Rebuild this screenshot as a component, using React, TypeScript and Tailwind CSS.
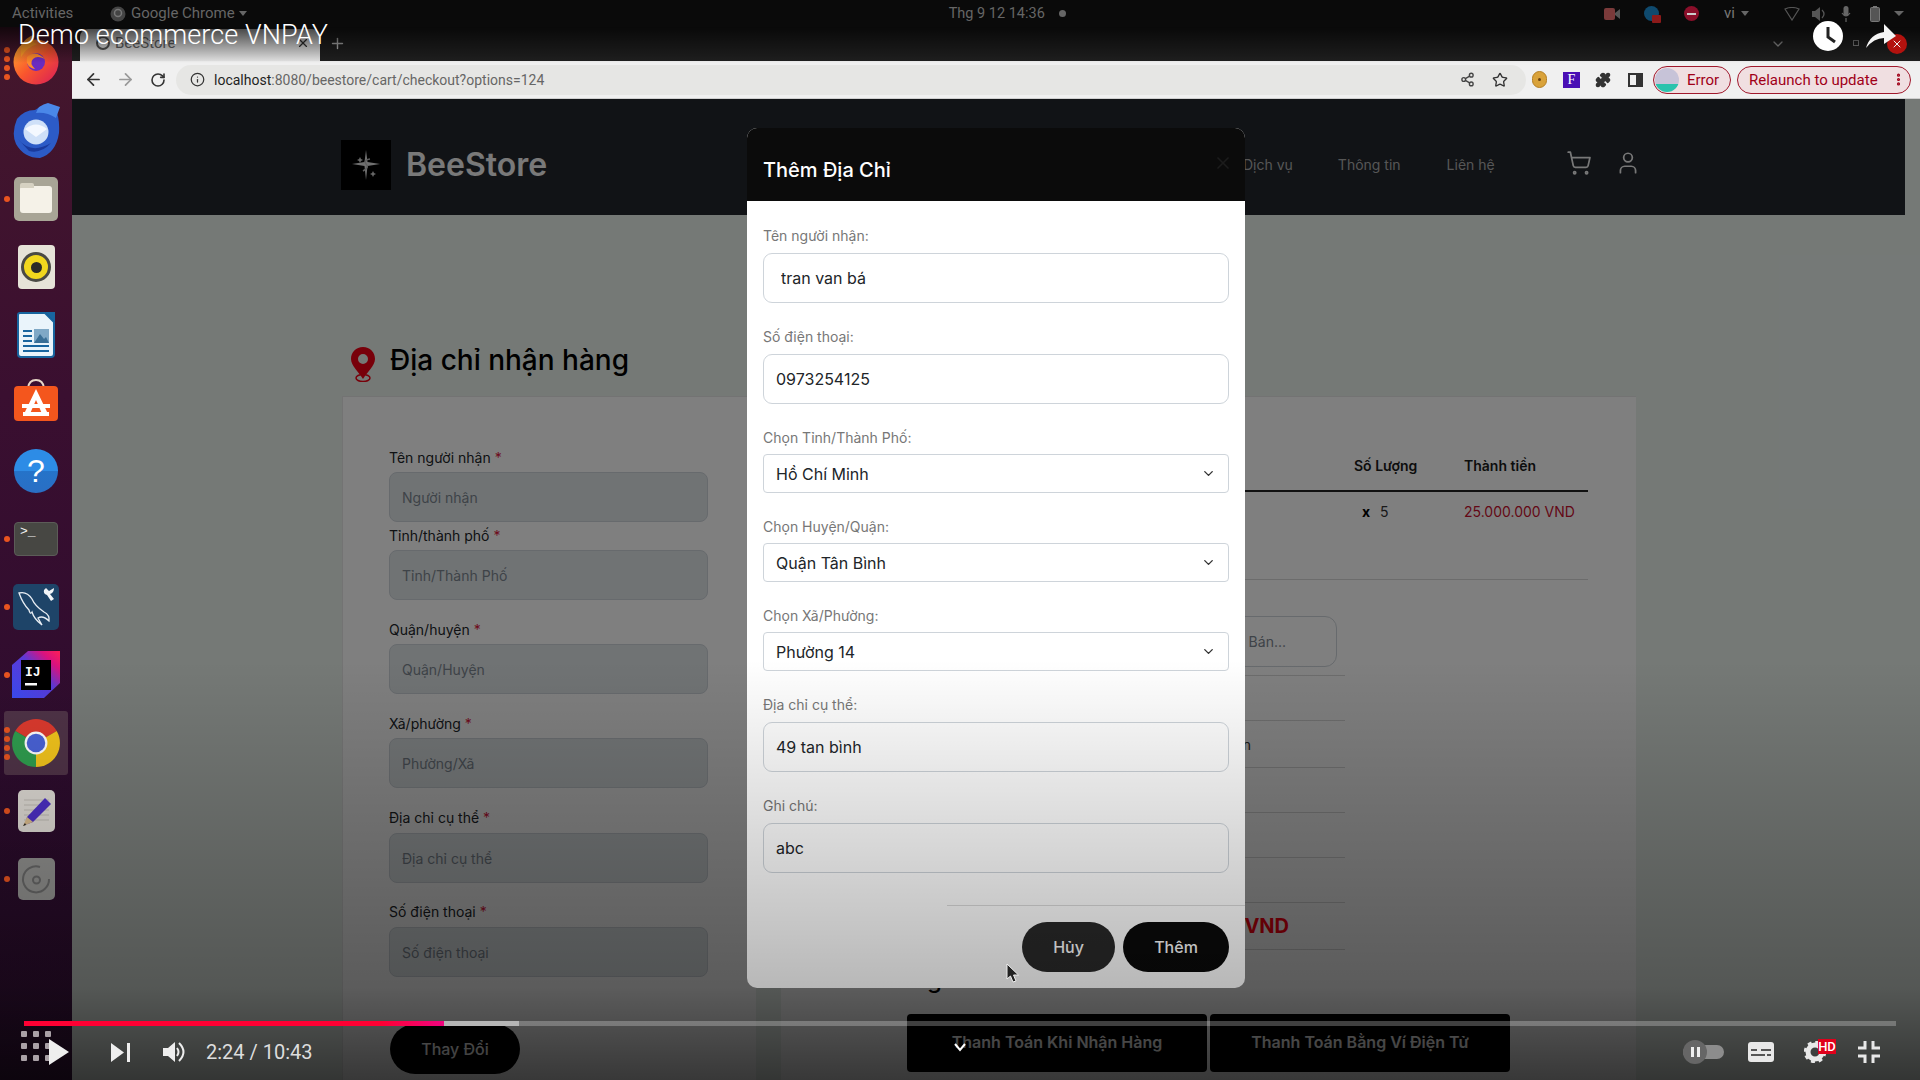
import { ArrowLeft, ArrowRight, RotateCw, Info, Share2, Star, Puzzle, MoreVertical, ShoppingCart, User, ChevronDown, X, Plus } from "lucide-react";

const Firefox = () => (
  <svg width="46" height="50" viewBox="0 0 46 50" className="-mt-[6px]">
    <defs>
      <linearGradient id="ff" x1="0" y1="0" x2="1" y2="1"><stop offset="0" stopColor="#ffb52e" /><stop offset="0.5" stopColor="#f9562d" /><stop offset="1" stopColor="#d81b5a" /></linearGradient>
    </defs>
    <circle cx="23" cy="27" r="22.5" fill="url(#ff)" />
    <path d="M8 10 Q14 2 20 0 Q18 8 24 9 Q14 12 8 22 Z" fill="#ff9b28" />
    <circle cx="23" cy="27" r="9" fill="#6a2bc0" />
    <path d="M14 22 Q22 14 32 24 Q24 20 20 24 Q16 28 22 34 Q12 32 14 22 Z" fill="#ff8a2a" />
  </svg>
);
const Thunderbird = () => (
  <svg width="50" height="56" viewBox="0 0 50 56">
    <path d="M6 16 Q0 30 5 41 Q13 55 29 55 Q45 50 48 30 Q49 14 44 6 Q34 -1 24 7 Q13 7 6 16 Z" fill="#2c5bc7" />
    <path d="M49 4 L37 0 Q27 2 25 10 Q36 9 45 15 Z" fill="#4a87e8" />
    <circle cx="25" cy="29" r="12.5" fill="#cfe0f8" />
    <path d="M14 26 L25 34 L36 26 Q25 17 14 26 Z" fill="#f4f8ff" />
    <path d="M7 36 Q20 52 40 40 Q30 51 18 48 Z" fill="#1a3a9c" />
  </svg>
);
const Files = () => (
  <div className="w-[44px] h-[44px] rounded-[5px] bg-[#a8a596] flex items-center justify-center">
    <div className="relative w-[32px] h-[27px] rounded-[3px] bg-[#f5f2e8]">
      <div className="absolute -top-[3px] left-0 w-[14px] h-[5px] rounded-t-[2px] bg-[#d6d2c2]" />
    </div>
  </div>
);
const Rhythmbox = () => (
  <div className="w-[37px] h-[44px] rounded-[4px] bg-[#e6e3d8] flex items-center justify-center">
    <div className="w-[30px] h-[30px] rounded-full bg-[#f1d71e] border-[3px] border-[#4a4a44] flex items-center justify-center">
      <div className="w-[11px] h-[11px] rounded-full bg-[#2b2b28]" />
    </div>
  </div>
);
const Writer = () => (
  <svg width="38" height="46" viewBox="0 0 38 46">
    <path d="M3 1 H28 L37 10 V42 Q37 45 34 45 H4 Q1 45 1 42 V3 Q1 1 3 1 Z" fill="#eaf4fb" stroke="#18659f" strokeWidth="2" />
    <path d="M28 0 L38 10 V0 Z" fill="#18659f" />
    <path d="M6 19 H15 M6 24 H15 M6 29 H15 M6 34 H32 M6 39 H32" stroke="#18659f" strokeWidth="2" />
    <rect x="17" y="17" width="15" height="14" fill="#7fa8c6" />
    <path d="M17 31 L23 22 L27 27 L29 25 L32 31 Z" fill="#3a6f96" />
  </svg>
);
const Software = () => (
  <svg width="44" height="44" viewBox="0 0 44 44" className="-mt-[6px]">
    <path d="M14 10 Q15 2 22 2 Q29 2 30 10" fill="none" stroke="#e8d8c8" strokeWidth="2" />
    <rect x="0" y="8" width="44" height="35" rx="4" fill="#f4561d" />
    <path d="M22 11 L35 38 H29 L22 22 L15 38 H9 Z" fill="#fff" />
    <rect x="8" y="26" width="28" height="4" fill="#fff" />
    <rect x="9" y="34" width="26" height="4" fill="#fff" />
  </svg>
);
const Help = () => (
  <div className="w-[44px] h-[44px] rounded-full bg-[linear-gradient(to_bottom,#2d8ce6_0%,#2d8ce6_50%,#2573c9_50%,#2a6fc4_100%)] flex items-center justify-center text-white text-[32px] leading-none [font-family:'Liberation_Sans',sans-serif]">?</div>
);
const Terminal = () => (
  <div className="w-[44px] h-[34px] rounded-[4px] bg-[#474743] border border-[#5c5c58] pl-[5px] pt-[2px] text-[#f2f2f2] text-[13px] leading-[14px] [font-family:'Liberation_Mono',monospace]">&gt;_</div>
);
const MySql = () => (
  <svg width="46" height="46" viewBox="0 0 46 46">
    <rect width="46" height="46" rx="5" fill="#1e4468" />
    <path d="M6 9 Q14 7 19 15 Q22 22 31 28 Q37 31 36 37 Q30 31 25 34 L29 41 Q21 35 19 28 Q17 31 16 26 Q10 20 6 9 Z" fill="none" stroke="#e8eef4" strokeWidth="1.3" />
    <path d="M33 4 L36 7 L41 4 Q41 9 37 10 L41 15 L38 17 L34 11 Q30 10 31 6 Z" fill="#f2f5f8" />
  </svg>
);
const Intellij = () => (
  <svg width="50" height="48" viewBox="0 0 50 48">
    <defs>
      <linearGradient id="ij" x1="0" y1="1" x2="1" y2="0"><stop offset="0" stopColor="#3a4bf2" /><stop offset="0.55" stopColor="#5b3ad6" /><stop offset="0.8" stopColor="#d9127f" /><stop offset="1" stopColor="#ff1f55" /></linearGradient>
    </defs>
    <path d="M1 14 L17 0 H49 V32 L33 47 H1 Z" fill="url(#ij)" />
    <rect x="10" y="9" width="30" height="30" fill="#000" />
    <rect x="14" y="32" width="12" height="2.5" fill="#fff" />
    <text x="14" y="25" fill="#fff" fontSize="13" fontWeight="700" fontFamily="Liberation Mono, monospace">IJ</text>
  </svg>
);
const Chrome = () => (
  <svg width="48" height="48" viewBox="0 0 44 44">
    <path d="M22 22 L3 11 A22 22 0 0 1 41 11 Z" fill="#dd3a2e" />
    <path d="M22 22 L41 11 A22 22 0 0 1 22 44 Z" fill="#f4c51c" />
    <path d="M22 22 L22 44 A22 22 0 0 1 3 11 Z" fill="#2f9e4f" />
    <circle cx="22" cy="22" r="10.5" fill="#fff" />
    <circle cx="22" cy="22" r="8.5" fill="#4a63d8" />
  </svg>
);
const Editor = () => (
  <svg width="37" height="42" viewBox="0 0 37 42">
    <rect width="37" height="42" rx="5" fill="#ddd9d3" />
    <path d="M6 10 H31 M6 15 H31 M6 20 H31 M6 25 H31 M6 30 H31" stroke="#bdb9b2" strokeWidth="1" />
    <path d="M27 8 L33 14 L15 32 L7 35 L9 27 Z" fill="#4b2fc4" />
    <path d="M9 27 L15 32 L5 36 Z" fill="#d7b98b" />
    <path d="M7 33 L5 36 L8 35 Z" fill="#222" />
  </svg>
);
const Disc = () => (
  <svg width="37" height="42" viewBox="0 0 37 42">
    <rect width="37" height="42" rx="5" fill="#8e8e8c" />
    <path d="M22 9 A13 13 0 1 0 31 21" fill="none" stroke="#666" strokeWidth="2" />
    <circle cx="18.5" cy="22" r="3.5" fill="none" stroke="#666" strokeWidth="2" />
  </svg>
);

const dockItems = [
  { icon: <Firefox />, dots: 4 },
  { icon: <Thunderbird />, dots: 0 },
  { icon: <Files />, dots: 1 },
  { icon: <Rhythmbox />, dots: 0 },
  { icon: <Writer />, dots: 0 },
  { icon: <Software />, dots: 0 },
  { icon: <Help />, dots: 0 },
  { icon: <Terminal />, dots: 1 },
  { icon: <MySql />, dots: 1 },
  { icon: <Intellij />, dots: 1 },
  { icon: <Chrome />, dots: 4, active: true },
  { icon: <Editor />, dots: 1 },
  { icon: <Disc />, dots: 1 },
];

function Dock() {
  return (
    <div className="w-[72px] shrink-0 pt-[2px] flex flex-col bg-[linear-gradient(to_bottom,#45172c_0%,#3a0f30_35%,#2e0c2e_70%,#1d0a1f_100%)]">
      {dockItems.map((d, i) => (
        <div key={i} className="relative h-[68px] flex items-center justify-center">
          {d.active && <div className="absolute left-[4px] right-[4px] top-[2px] bottom-[2px] rounded-[3px] bg-[#4f3347]" />}
          <div className="relative flex items-center justify-center">{d.icon}</div>
          {d.dots > 0 && (
            <div className="absolute left-[4px] top-0 bottom-0 flex flex-col justify-center gap-[3px]">
              {Array.from({ length: d.dots }).map((_, k) => (
                <span key={k} className="w-[6px] h-[6px] rounded-full bg-[#e95420]" />
              ))}
            </div>
          )}
        </div>
      ))}
    </div>
  );
}

function TopBar() {
  return (
    <div className="relative h-[27px] shrink-0 bg-[#0a0a0a] flex items-center text-[#666666] text-[15px] [font-family:Roboto,sans-serif] pl-[12px] pr-[16px]">
      <span className="w-[98px]">Activities</span>
      <svg width="16" height="16" viewBox="0 0 16 16" className="mr-[5px]"><circle cx="8" cy="8" r="7.5" fill="#444" /><circle cx="8" cy="7" r="3.5" fill="none" stroke="#777" strokeWidth="1.5" /></svg>
      <span>Google Chrome</span>
      <span className="ml-[4px] w-0 h-0 border-l-[4px] border-r-[4px] border-t-[5px] border-l-transparent border-r-transparent border-t-[#666]" />
      <div className="ml-[702px] flex items-center text-[14.5px]">
        <span className="w-[110px]">Thg 9 12  14:36</span>
        <span className="w-[7px] h-[7px] rounded-full bg-[#666]" />
      </div>
      <div className="ml-auto flex items-center">
        <svg width="16" height="12" viewBox="0 0 16 12"><rect width="11" height="12" rx="2" fill="#7a3a3a" /><path d="M11 5 L16 1 V11 L11 7 Z" fill="#555" /></svg>
        <span className="relative ml-[24px] w-[15px] h-[15px] rounded-full bg-[#0f4a6e]"><span className="absolute -right-[2px] -bottom-[2px] w-[9px] h-[8px] bg-[#8b1a1a] rounded-[1px]" /></span>
        <span className="ml-[25px] w-[15px] h-[15px] rounded-full bg-[#8a0f2a] flex items-center justify-center"><span className="w-[9px] h-[2px] bg-[#ccc]" /></span>
        <span className="ml-[25px] text-[#777] text-[15px]">vi</span>
        <span className="ml-[6px] w-0 h-0 border-l-[4px] border-r-[4px] border-t-[5px] border-l-transparent border-r-transparent border-t-[#666]" />
        <svg width="16" height="14" viewBox="0 0 16 14" className="ml-[35px]"><path d="M1 2 Q8 -1 15 2 L8 13 Z" fill="none" stroke="#555" strokeWidth="1.2" /></svg>
        <svg width="15" height="14" viewBox="0 0 15 14" className="ml-[12px]"><path d="M0 4 H3 L8 0 V14 L3 10 H0 Z" fill="#555" /><path d="M10 3 Q14 7 10 11" fill="none" stroke="#555" strokeWidth="1.3" /></svg>
        <svg width="10" height="16" viewBox="0 0 10 16" className="ml-[14px]"><rect x="2.5" y="0" width="5" height="10" rx="2.5" fill="#666" /><path d="M1 7 Q5 13 9 7 M5 12 V16" fill="none" stroke="#666" strokeWidth="1.2" /></svg>
        <svg width="10" height="16" viewBox="0 0 10 16" className="ml-[19px]"><rect x="0.5" y="1.5" width="9" height="14" rx="1" fill="#555" stroke="#777" /><rect x="3" y="0" width="4" height="2" fill="#777" /></svg>
        <span className="ml-[14px] w-0 h-0 border-l-[5px] border-r-[5px] border-t-[5px] border-l-transparent border-r-transparent border-t-[#666]" />
      </div>
    </div>
  );
}

function TabStrip() {
  return (
    <div className="relative h-[34px] shrink-0 bg-[#1f1f1f] flex items-end pl-[8px]">
      <div className="w-[240px] h-[32px] rounded-t-[8px] bg-[#e6e6e6] flex items-center pl-[16px] pb-[4px] pr-[10px] text-[#666] text-[15px] [font-family:Roboto,sans-serif]">
        <span className="w-[14px] h-[14px] rounded-full border-[2px] border-[#555] mr-[5px]" />
        <span>BeeStore</span>
        <X className="ml-auto" size={14} color="#333" />
      </div>
      <Plus className="ml-[9px] mb-[9px]" size={17} color="#bbb" />
      <ChevronDown className="absolute left-[1698px] top-[9px]" size={16} color="#999" />
      <span className="absolute left-[1781px] top-[13px] w-[6px] h-[6px] border border-[#888]" />
    </div>
  );
}

function Toolbar() {
  return (
    <div className="relative h-[38px] shrink-0 bg-[#f0f0f0] border-b border-[#cfcfcf] flex items-center pl-[12px]">
      <ArrowLeft size={19} color="#333" strokeWidth={2.2} />
      <ArrowRight size={19} color="#999" strokeWidth={2.2} className="ml-[13px]" />
      <RotateCw size={16} color="#333" strokeWidth={2.4} className="ml-[15px]" />
      <div className="ml-[10px] h-[30px] w-[1350px] rounded-full bg-[#e6e6e4] flex items-center pl-[14px] pr-[18px]">
        <Info size={15} color="#333" />
        <span className="ml-[9px] mt-[2px] text-[14px] [font-family:Roboto,sans-serif] text-[#666]"><span className="text-[#1f1f1f]">localhost</span>:8080/beestore/cart/checkout?options=124</span>
        <Share2 size={15} color="#444" strokeWidth={2.2} className="ml-auto" />
        <Star size={16} color="#333" strokeWidth={2} className="ml-[17px]" />
      </div>
      <span className="ml-[6px] w-[15px] h-[17px] rounded-full bg-[#d9a23a] border border-[#b57f22] flex items-center justify-center"><span className="w-[3px] h-[3px] rounded-full bg-[#6a4310]" /></span>
      <span className="ml-[16px] w-[17px] h-[16px] bg-[#4a0fb5] text-white text-[14px] leading-[16px] text-center [font-family:'Liberation_Serif',serif]">F</span>
      <Puzzle size={16} color="#333" fill="#333" className="ml-[15px]" />
      <span className="ml-[17px] w-[15px] h-[14px] border-[2px] border-[#333] flex justify-end"><span className="w-[5px] h-full bg-[#333]" /></span>
      <div className="ml-[10px] h-[28px] w-[78px] rounded-full border border-[#a0182c] bg-[#f0dfe1] flex items-center pl-[1px] text-[#a00018] text-[15px] [font-family:Roboto,sans-serif]">
        <span className="w-[24px] h-[24px] rounded-full bg-[linear-gradient(to_bottom,#c7c3d8_0%,#c7c3d8_65%,#2ac3ad_65%,#2ac3ad_100%)]" />
        <span className="ml-[8px] mt-[2px]">Error</span>
      </div>
      <div className="ml-[6px] h-[28px] w-[174px] rounded-full border border-[#a0182c] bg-[#f0dfe1] flex items-center pl-[11px] text-[#a00018] text-[15px] [font-family:Roboto,sans-serif]">
        <span className="mt-[2px]">Relaunch to update</span>
        <MoreVertical size={15} className="ml-auto mr-[4px]" strokeWidth={3} />
      </div>
    </div>
  );
}

function Header() {
  return (
    <div className="h-[116px] w-[1833px] shrink-0 bg-[#22262c] flex items-center pt-[16px] relative">
      <div className="ml-[269px] w-[50px] h-[50px] bg-black flex items-center justify-center">
        <svg width="30" height="32" viewBox="0 0 30 32">
          <path d="M15 1 L16.5 13 L29 15 L16.5 17 L15 31 L13.5 17 L1 15 L13.5 13 Z" fill="#e0e0e0" />
          <path d="M9 8 L10 10 L12 11 L10 12 L9 14 L8 12 L6 11 L8 10 Z M22 22 L23 24 L25 25 L23 26 L22 28 L21 26 L19 25 L21 24 Z" fill="#ccc" />
          <path d="M19 10 Q12 11 15 15 Q19 18 12 22" fill="none" stroke="#bbb" strokeWidth="1.5" />
        </svg>
      </div>
      <span className="ml-[15px] text-[#f2f2f2] text-[32px] font-semibold">BeeStore</span>
      <nav className="absolute left-[1171px] top-[55px] flex text-[#adadad] text-[14px]">
        <span>Dịch vụ</span>
        <span className="ml-[45px]">Thông tin</span>
        <span className="ml-[46px]">Liên hệ</span>
      </nav>
      <ShoppingCart className="absolute left-[1494px] top-[51px] text-[#f0f0f0]" size={26} strokeWidth={1.6} />
      <User className="absolute left-[1543px] top-[51px] text-[#f0f0f0]" size={26} strokeWidth={1.6} />
    </div>
  );
}

const leftFields = [
  { label: "Tên người nhận", ph: "Người nhận", cls: "mt-[22px] mb-[4px]" },
  { label: "Tỉnh/thành phố", ph: "Tỉnh/Thành Phố", cls: "mt-[3px] mb-[4px]" },
  { label: "Quận/huyện", ph: "Quận/Huyện", cls: "mt-[19px] mb-[4px]" },
  { label: "Xã/phường", ph: "Phường/Xã", cls: "mt-[19px] mb-[4px]" },
  { label: "Địa chỉ cụ thể", ph: "Địa chỉ cụ thể", cls: "mt-[19px] mb-[5px]" },
  { label: "Số điện thoại", ph: "Số điện thoại", cls: "mt-[18px] mb-[5px]" },
];

function LeftPanel() {
  return (
    <div className="w-[414px] shrink-0 bg-white border-l border-t border-[#e6e6e6] pl-[46px] pt-[28px]">
      {leftFields.map((f) => (
        <div key={f.label}>
          <div className={"text-[14px] leading-[21px] text-[#212529] " + f.cls}>
            {f.label} <span className="text-[#dc143c]">*</span>
          </div>
          <input readOnly placeholder={f.ph} className="block w-[319px] h-[50px] rounded-[8px] border border-[#ced4da] bg-[#e0e6e9] px-[12px] text-[14px] placeholder:text-[#7d8690]" />
        </div>
      ))}
      <button className="mt-[47px] ml-[1px] w-[130px] h-[50px] rounded-full bg-black text-white text-[16px] font-medium">Thay Đổi</button>
    </div>
  );
}

function RightPanel() {
  return (
    <div className="w-[855px] shrink-0 bg-white border-t border-[#e6e6e6] pl-[48px] pt-[58px]">
      <div className="w-[759px] flex text-[14px] font-semibold text-[#1a1a1a] leading-[21px] pb-[14px] border-b-2 border-[#222]">
        <span className="w-[525px]">Sản Phẩm</span>
        <span className="w-[110px]">Số Lượng</span>
        <span>Thành tiền</span>
      </div>
      <div className="w-[759px] h-[88px] border-b border-[#d9d9d9] flex pt-[9px] text-[14px] leading-[21px]">
        <span className="w-[533px]">Sản phẩm</span>
        <span className="w-[18px] font-bold text-black">x</span>
        <span className="w-[84px] text-[#333]">5</span>
        <span className="text-[#c8102e]">25.000.000 VND</span>
      </div>
      <div className="w-[516px]">
        <div className="h-[96px] border-b border-[#d9d9d9] pt-[36px]">
          <div className="ml-[254px] h-[51px] w-[254px] rounded-[12px] border border-[#ced4da] flex items-center justify-end pr-[50px] text-[14px] whitespace-nowrap overflow-hidden text-[#7d8690]">Người Bán...</div>
        </div>
        <div className="h-[45px] border-b border-[#d9d9d9]" />
        <div className="h-[47px] border-b border-[#d9d9d9] flex items-center justify-end pr-[94px] text-[14px] text-[#333]">Thanh toán</div>
        <div className="h-[45px] border-b border-[#d9d9d9]" />
        <div className="h-[45px] border-b border-[#d9d9d9]" />
        <div className="h-[45px] border-b border-[#d9d9d9]" />
        <div className="h-[47px] border-b border-[#d9d9d9] flex items-center justify-end pr-[56px] text-[20px] font-bold text-[#ff0010]">25.000.000 VND</div>
      </div>
      <div className="ml-[25px] mt-[14px] text-[24px] leading-[32px] font-medium text-black">Phương thức thanh toán</div>
      <div className="ml-[78px] mt-[18px] flex gap-[3px]">
        <div className="w-[300px] h-[58px] rounded-[4px] bg-black flex justify-center pt-[16px] text-[16px] font-semibold text-white">Thanh Toán Khi Nhận Hàng</div>
        <div className="w-[300px] h-[58px] rounded-[4px] bg-black flex justify-center pt-[16px] text-[16px] font-semibold text-white">Thanh Toán Bằng Ví Điện Tử</div>
      </div>
    </div>
  );
}

const Field = ({ label, value, pad }: { label: string; value: string; pad?: string }) => (
  <div className="mb-[23px]">
    <div className="text-[14px] leading-[21px] mb-[7px] text-[#777777]">{label}</div>
    <input readOnly value={value} className={"block w-[466px] h-[50px] rounded-[9px] border border-[#ced4da] bg-white text-[16px] text-[#212529] " + (pad ?? "px-[12px]")} />
  </div>
);
const SelectField = ({ label, value }: { label: string; value: string }) => (
  <div className="mb-[23px]">
    <div className="text-[14px] leading-[21px] mb-[6px] text-[#777777]">{label}</div>
    <div className="w-[466px] h-[39px] rounded-[4px] border border-[#ced4da] bg-white flex items-center pl-[12px] pr-[12px] text-[16px] text-[#212529]">
      {value}
      <ChevronDown className="ml-auto" size={15} strokeWidth={2.2} color="#333" />
    </div>
  </div>
);

function Modal() {
  return (
    <div className="absolute left-[747px] top-[128px] w-[498px] h-[860px] rounded-[10px] overflow-hidden bg-white flex flex-col [font-family:Inter,sans-serif]">
      <div className="relative h-[73px] shrink-0 bg-[#0b0b0b] flex items-center pl-[16px] pt-[10px] text-white text-[20px] font-medium">
        Thêm Địa Chỉ
        <X className="absolute right-[12px] top-[25px]" size={20} color="#1c1c1c" />
      </div>
      <div className="px-[16px] pt-[24px]">
        <Field label="Tên người nhận:" value="tran van bá" pad="pl-[17px] pr-[12px]" />
        <Field label="Số điện thoại:" value="0973254125" />
        <SelectField label="Chọn Tỉnh/Thành Phố:" value="Hồ Chí Minh" />
        <SelectField label="Chọn Huyện/Quận:" value="Quận Tân Bình" />
        <SelectField label="Chọn Xã/Phường:" value="Phường 14" />
        <Field label="Địa chỉ cụ thể:" value="49 tan bình" />
        <Field label="Ghi chú:" value="abc" />
      </div>
      <div className="ml-auto w-[298px] h-px mt-[9px] bg-[#dcdcdc]" />
      <div className="flex justify-end gap-[8px] pr-[16px] pt-[16px]">
        <button className="w-[93px] h-[50px] rounded-full bg-[#292929] text-white text-[16px] font-medium">Hủy</button>
        <button className="w-[106px] h-[50px] rounded-full bg-[#0a0a0a] text-white text-[16px] font-medium">Thêm</button>
      </div>
    </div>
  );
}

function VideoOverlay() {
  return (
    <div className="absolute inset-0 pointer-events-none overflow-hidden [font-family:Roboto,sans-serif]">
      <div className="absolute left-0 right-0 top-[27px] h-[36px] bg-[linear-gradient(to_bottom,rgba(0,0,0,0.72),rgba(0,0,0,0))]" />
      <div className="absolute left-0 right-0 bottom-0 h-[420px] bg-[linear-gradient(to_bottom,rgba(0,0,0,0)_0%,rgba(0,0,0,0.28)_78%,rgba(0,0,0,0.56)_100%)]" />
      <div className="absolute left-[18px] top-[17px] text-white text-[27px] leading-[36px] font-light tracking-[0.1px]">Demo ecommerce VNPAY</div>
      <div className="absolute left-[1813px] top-[21px] w-[30px] h-[30px] rounded-full bg-white">
        <svg width="30" height="30" viewBox="0 0 30 30"><path d="M15 6 V16 L22 21" fill="none" stroke="#222" strokeWidth="3" /></svg>
      </div>
      <div className="absolute left-[1887px] top-[34px] w-[20px] h-[20px] rounded-full bg-[#b3120e] flex items-center justify-center"><X size={12} color="#eee" /></div>
      <svg className="absolute left-[1866px] top-[23px]" width="30" height="26" viewBox="0 0 30 26"><path d="M0 25 Q4 11 18 9 V1 L30 13 L18 21 V15 Q8 15 0 25 Z" fill="#f5f5f5" /></svg>

      <svg className="absolute left-[1006px] top-[963px]" width="14" height="21" viewBox="0 0 14 21"><path d="M1 1 L1 16 L4.5 13 L7 19 L10 18 L7.5 12 L12.5 12 Z" fill="#222" stroke="#eee" strokeWidth="1" /></svg>
      <svg className="absolute left-[953px] top-[1042px]" width="14" height="10" viewBox="0 0 14 10"><path d="M2 2 L7 8 L12 2" fill="none" stroke="#fff" strokeWidth="2" /></svg>

      <div className="absolute left-[24px] w-[1872px] top-[1021px] h-[5px] bg-[rgba(255,255,255,0.25)] flex">
        <div className="w-[420px] h-full bg-[linear-gradient(to_right,#ff0033_85%,#f0047f_100%)]" />
        <div className="w-[75px] h-full bg-[#b5b5b5]" />
      </div>

      <div className="absolute left-[21px] top-[1031px] w-[30px] grid grid-cols-3 gap-[6px]">
        {Array.from({ length: 9 }).map((_, i) => <span key={i} className="h-[6px] w-[6px] rounded-[1px] bg-[#aaa1a7]" />)}
      </div>

      <div className="absolute left-0 right-0 top-[1030px] h-[44px] flex items-center">
        <svg className="ml-[49px]" width="20" height="26" viewBox="0 0 20 26"><path d="M0 0 L20 13 L0 26 Z" fill="#eeeeee" /></svg>
        <svg className="ml-[42px]" width="19" height="19" viewBox="0 0 19 19"><path d="M0 0 L13 9.5 L0 19 Z M16 0 H19 V19 H16 Z" fill="#eeeeee" /></svg>
        <svg className="ml-[33px]" width="23" height="22" viewBox="0 0 23 22"><path d="M0 7 H5 L12 1 V21 L5 15 H0 Z" fill="#eeeeee" /><path d="M14 7 Q17 11 14 15" fill="none" stroke="#eee" strokeWidth="2" /><path d="M16 2 Q25 11 16 20" fill="none" stroke="#eee" strokeWidth="2" /></svg>
        <span className="ml-[20px] text-[#dddddd] text-[20px]">2:24 / 10:43</span>

        <div className="ml-auto relative w-[41px] h-[14px] rounded-full bg-[#8c8c8c] flex items-center">
          <span className="absolute left-0 -top-[5px] w-[24px] h-[24px] rounded-full bg-[#666] flex items-center justify-center gap-[3px]">
            <span className="w-[3px] h-[10px] bg-[#eee]" /><span className="w-[3px] h-[10px] bg-[#eee]" />
          </span>
        </div>
        <div className="ml-[24px] w-[26px] h-[20px] rounded-[3px] bg-[#e8e8e8] flex flex-col justify-center gap-[3px] px-[3px]">
          <span className="h-[2px] flex gap-[2px]"><span className="w-[6px] bg-[#555]" /><span className="flex-1 bg-[#555] ml-[2px]" /></span>
          <span className="h-[2px] flex gap-[2px]"><span className="flex-1 bg-[#555]" /><span className="w-[4px] bg-[#555]" /></span>
        </div>
        <div className="relative ml-[30px] w-[22px] h-[22px]">
          <svg width="22" height="22" viewBox="0 0 22 22"><circle cx="11" cy="11" r="7" fill="none" stroke="#e8e8e8" strokeWidth="5" /><circle cx="11" cy="11" r="10" fill="none" stroke="#e8e8e8" strokeWidth="2.5" strokeDasharray="4 3.85" /></svg>
          <span className="absolute left-[14px] -top-[2px] w-[18px] h-[15px] bg-[#e0001b] text-white text-[13px] leading-[15px] text-center font-medium">HD</span>
        </div>
        <svg className="ml-[31px] mr-[39px]" width="24" height="24" viewBox="0 0 24 24"><path d="M8 1 V8 H1 M16 1 V8 H23 M8 23 V16 H1 M16 23 V16 H23" fill="none" stroke="#e8e8e8" strokeWidth="3" /></svg>
      </div>
    </div>
  );
}

export default function App() {
  return (
    <div className="relative w-[1920px] h-[1080px] overflow-hidden flex flex-col bg-black [font-family:Inter,sans-serif]">
      <TopBar />
      <div className="flex flex-1 min-h-0">
        <Dock />
        <div className="relative flex-1 min-w-0 flex flex-col">
          <TabStrip />
          <Toolbar />
          <div className="relative flex-1 min-h-0 overflow-hidden bg-[#eaf2ed] flex flex-col">
            <Header />
            <div className="ml-[279px] mt-[132px] h-[49px] flex items-start">
              <svg width="24" height="35" viewBox="0 0 24 35">
                <path d="M12 0 C5 0 0 5 0 12 C0 19 8 25 12 32 C16 25 24 19 24 12 C24 5 19 0 12 0 Z M12 7 A5 5 0 1 1 12 17 A5 5 0 1 1 12 7 Z" fill="#f00014" fillRule="evenodd" />
                <ellipse cx="12" cy="31" rx="7" ry="3.5" fill="none" stroke="#f00014" strokeWidth="1.5" />
              </svg>
              <span className="ml-[15px] text-[28px] leading-[28px] mt-[-1px] font-medium text-black">Địa chỉ nhận hàng</span>
            </div>
            <div className="ml-[270px] flex flex-1 min-h-0 gap-[25px]">
              <LeftPanel />
              <RightPanel />
            </div>
            <div className="absolute inset-0 bg-black/50" />
          </div>
        </div>
      </div>
      <Modal />
      <VideoOverlay />
    </div>
  );
}
